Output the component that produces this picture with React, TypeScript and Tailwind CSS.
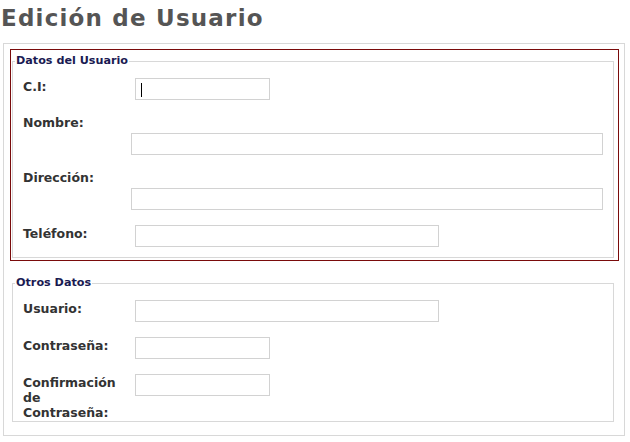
import React from "react";

function Field({ width, caret }: { width: string; caret?: boolean }) {
	return (
		<div className={`relative h-[22px] border border-[#d2d2d2] bg-white ${width}`}>
			{caret && <span className="absolute left-[5px] top-[4px] h-[14px] w-px bg-black"></span>}
		</div>
	);
}

function Row({ label, width, caret, top }: { label: string; width: string; caret?: boolean; top: string }) {
	return (
		<div className={`flex items-start ${top}`}>
			<div className="mt-[1px] w-[100px] leading-[15px]">{label}</div>
			<div className="ml-[12px]">
				<Field width={width} caret={caret} />
			</div>
		</div>
	);
}

function WideRow({ label }: { label: string }) {
	return (
		<div className="mt-[15px]">
			<div className="leading-[15px]">{label}</div>
			<div className="ml-[108px] mt-[3px]">
				<Field width="w-[472px]" />
			</div>
		</div>
	);
}

export default function App() {
	return (
		<div className="min-h-[442px] bg-white font-['DejaVu_Sans',sans-serif]">
			<h1 className="pl-[1px] pt-[4px] text-[23px] font-bold leading-[28px] tracking-[1.2px] text-[#555555]">
				Edición de Usuario
			</h1>
			<div className="ml-[3px] mt-[11px] w-[622px] border border-[#d8d8d8] pb-[13px] pl-[6px] pr-[5px] pt-[5px] text-[12.5px] font-bold text-[#333333]">
				<div className="border border-[#7a0b0b] pb-[2px] pl-[1px] pr-[4px] pt-[5px]">
					<fieldset className="border border-[#d8d8d8] pb-[10px] pl-[10px]">
						<legend className="ml-[-8px] px-[1px] text-[11.2px] leading-[12px] text-[#1a1a52]">Datos del Usuario</legend>
						<Row label="C.I:" width="w-[135px]" caret top="mt-[11px]" />
						<WideRow label="Nombre:" />
						<WideRow label="Dirección:" />
						<Row label="Teléfono:" width="w-[304px]" top="mt-[15px]" />
					</fieldset>
				</div>
				<fieldset className="ml-[2px] mr-[5px] mt-[16px] border border-[#d8d8d8] pb-[1px] pl-[10px]">
					<legend className="ml-[-8px] px-[1px] text-[11.2px] leading-[12px] text-[#1a1a52]">Otros Datos</legend>
					<Row label="Usuario:" width="w-[304px]" top="mt-[11px]" />
					<Row label="Contraseña:" width="w-[135px]" top="mt-[15px]" />
					<Row label="Confirmación de Contraseña:" width="w-[135px]" top="mt-[15px]" />
				</fieldset>
			</div>
		</div>
	);
}
